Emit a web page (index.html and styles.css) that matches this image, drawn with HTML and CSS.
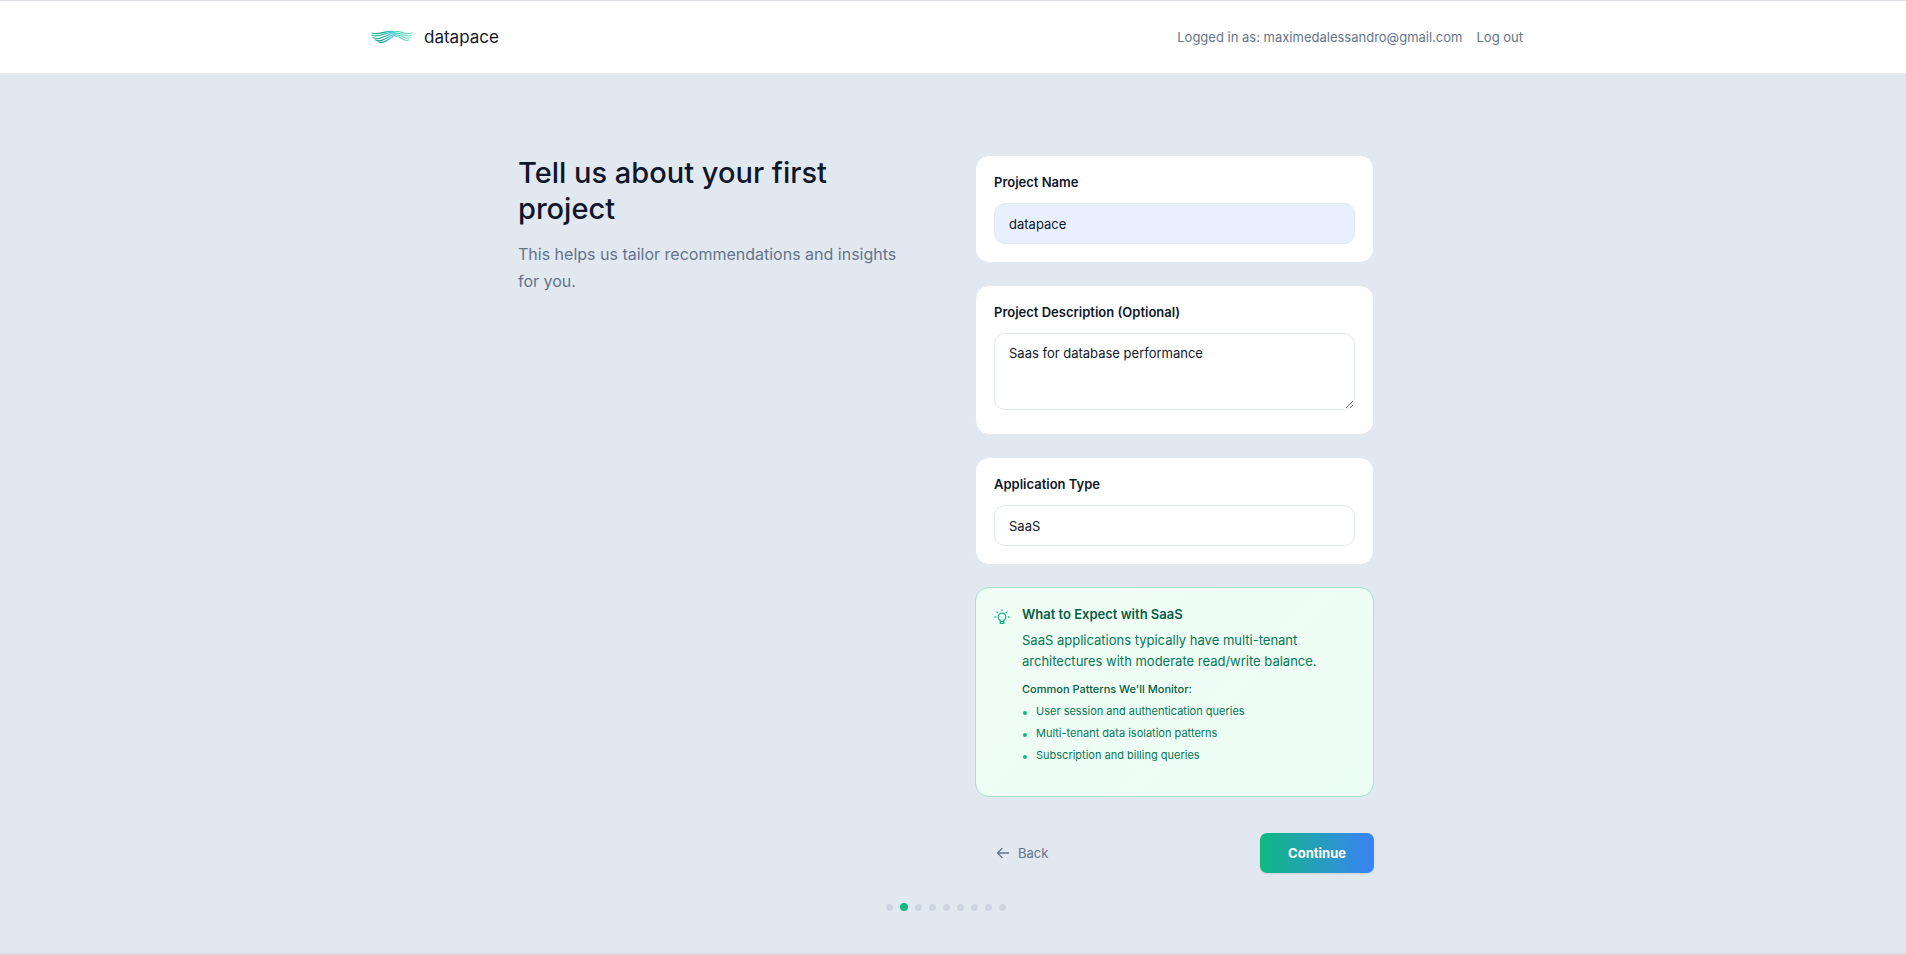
FILE: index.html
```html
<!DOCTYPE html>
<html lang="en">
<head>
    <meta charset="UTF-8">
    <meta name="viewport" content="width=device-width, initial-scale=1.0">
    <title>datapace</title>
    <link rel="stylesheet" href="styles.css">
</head>
<body>
    <header class="header">
        <div class="header-inner">
            <a class="brand" href="#">
                <svg class="brand-mark" viewBox="0 0 42 16" fill="none" stroke-linecap="round" aria-hidden="true">
                    <defs>
                        <linearGradient id="wave-left" x1="0" y1="0" x2="26" y2="0" gradientUnits="userSpaceOnUse">
                            <stop offset="0" stop-color="#2cc79a"/>
                            <stop offset="0.4" stop-color="#0e9f86"/>
                            <stop offset="0.75" stop-color="#38bfe0"/>
                            <stop offset="1" stop-color="#5be3c4"/>
                        </linearGradient>
                        <linearGradient id="wave-right" x1="16" y1="0" x2="42" y2="0" gradientUnits="userSpaceOnUse">
                            <stop offset="0" stop-color="#6be8bf"/>
                            <stop offset="0.5" stop-color="#22c3a6"/>
                            <stop offset="1" stop-color="#5fe6c6"/>
                        </linearGradient>
                    </defs>
                    <g stroke="url(#wave-right)">
                        <path d="M22 3.500C29 0 33 6.500 41 4"/>
                        <path d="M24 4.500C30 2.500 34 9 40.500 6.300"/>
                        <path d="M24 6C30 4.500 34 11.500 39.500 8.600"/>
                        <path d="M25 7.500C30 7 33 13.300 38 11"/>
                    </g>
                    <g stroke="url(#wave-left)" stroke-width="1.2">
                        <path d="M1 4C8 7 14 1 23 2.500"/>
                        <path d="M1 6.200C8 9.500 14 3 23 3"/>
                        <path d="M2 8.500C9 12 14 5.800 24 3.500"/>
                        <path d="M4 10.800C10 14 15 9 25 4"/>
                        <path d="M7.500 12.800C13 15 17 11 26 4.500"/>
                    </g>
                </svg>
                <span class="brand-name">datapace</span>
            </a>
            <div class="account">
                <span>Logged in as: maximedalessandro@gmail.com</span>
                <a href="#">Log out</a>
            </div>
        </div>
    </header>

    <main class="main">
        <div class="columns">
            <section class="intro">
                <h1>Tell us about your first project</h1>
                <p>This helps us tailor recommendations and insights for you.</p>
            </section>

            <form class="form">
                <div class="card">
                    <label for="name">Project Name</label>
                    <input class="field filled" id="name" type="text" value="datapace">
                </div>

                <div class="card card-description">
                    <label for="description">Project Description (Optional)</label>
                    <textarea class="field" id="description">Saas for database performance</textarea>
                </div>

                <div class="card">
                    <label for="type">Application Type</label>
                    <select class="field" id="type">
                        <option>SaaS</option>
                    </select>
                </div>

                <div class="expect">
                    <svg class="bulb" viewBox="0 0 16 16" fill="none" stroke="currentColor" stroke-width="1.3" stroke-linecap="round" stroke-linejoin="round" aria-hidden="true">
                        <path d="M6.200 11.400C5 10.700 4.200 9.500 4.200 8a3.800 3.800 0 0 1 7.600 0c0 1.500-.8 2.700-2 3.400v3H6.200zM6.200 12.400h3.600M8 1v.6M3 3l.5.5M13 3l-.5.5M1 8h.7M14.300 8h.7"/>
                    </svg>
                    <div>
                        <h2>What to Expect with SaaS</h2>
                        <p>SaaS applications typically have multi-tenant architectures with moderate read/write balance.</p>
                        <h3>Common Patterns We'll Monitor:</h3>
                        <ul>
                            <li>User session and authentication queries</li>
                            <li>Multi-tenant data isolation patterns</li>
                            <li>Subscription and billing queries</li>
                        </ul>
                    </div>
                </div>

                <div class="actions">
                    <button class="btn-back" type="button">
                        <svg viewBox="0 0 14 14" fill="none" stroke="currentColor" stroke-width="1.3" stroke-linecap="round" stroke-linejoin="round" aria-hidden="true">
                            <path d="M12.500 7H1.500M6 2.500L1.500 7L6 11.500"/>
                        </svg>
                        Back
                    </button>
                    <button class="btn-continue" type="submit">Continue</button>
                </div>
            </form>
        </div>

        <div class="steps">
            <span></span>
            <span class="active"></span>
            <span></span>
            <span></span>
            <span></span>
            <span></span>
            <span></span>
            <span></span>
            <span></span>
        </div>
    </main>
    <div class="bottom-edge"></div>
</body>
</html>
```

FILE: styles.css
```css
* {
    box-sizing: border-box;
}
body {
    margin: 0;
    min-height: 100vh;
    display: flex;
    flex-direction: column;
    background: #e2e8f0;
    color: #0f172a;
    font-family: Inter, sans-serif;
    font-size: 13px;
    line-height: 18px;
}
h1, h2, h3, p, ul {
    margin: 0;
}
a {
    color: inherit;
    text-decoration: none;
}

.header {
    background: #fff;
    border-top: 1px solid #dcdde4;
    padding: 0 12px 0 0;
}
.header-inner {
    max-width: 1152px;
    height: 72px;
    margin: 0 auto;
    display: flex;
    align-items: center;
    justify-content: space-between;
}
.brand {
    display: flex;
    align-items: center;
    gap: 11px;
}
.brand-mark {
    width: 42px;
    height: 16px;
}
.brand-name {
    font-size: 17px;
}
.account {
    display: flex;
    gap: 14px;
    color: #64748b;
}

.main {
    flex: 1;
    padding: 82px 14px 0 0;
}
.columns {
    max-width: 856px;
    margin: 0 auto;
    display: grid;
    grid-template-columns: 1fr 1fr;
    gap: 58px;
}
.intro h1 {
    font-size: 29px;
    font-weight: 500;
    line-height: 36px;
}
.intro p {
    margin-top: 14px;
    color: #64748b;
    font-size: 16px;
    line-height: 27px;
}

.form {
    display: flex;
    flex-direction: column;
    gap: 22px;
}
.card {
    background: #fff;
    border: 1px solid #e2e8f0;
    border-radius: 14px;
    padding: 18px;
}
.card-description {
    padding-bottom: 24px;
}
.card label {
    display: block;
    margin-bottom: 13px;
    font-weight: 600;
    line-height: 16px;
}
.field {
    display: block;
    width: 100%;
    height: 41px;
    padding: 10px 14px;
    border: 1px solid #e2e8f0;
    border-radius: 11px;
    background: #fff;
    color: #0f172a;
    font: inherit;
    appearance: none;
}
textarea.field {
    height: 77px;
    resize: vertical;
}
.filled {
    background: #e8f0fe;
}

.expect {
    display: flex;
    gap: 12px;
    min-height: 210px;
    padding: 18px;
    border: 1px solid #a7e3cb;
    border-radius: 14px;
    background: linear-gradient(135deg, #f0fdf4, #ecfdf5);
    color: #047857;
}
.bulb {
    flex: none;
    width: 16px;
    height: 16px;
    margin-top: 3px;
    color: #10b981;
}
.expect h2 {
    color: #065f46;
    font-size: 13px;
    font-weight: 600;
    line-height: 16px;
}
.expect p {
    margin-top: 8px;
    line-height: 21px;
}
.expect h3 {
    margin-top: 8px;
    color: #065f46;
    font-size: 11px;
    font-weight: 500;
}
.expect ul {
    margin-top: 4px;
    padding: 0;
    display: grid;
    gap: 4px;
    list-style: none;
    font-size: 11px;
    line-height: 18px;
}
.expect li {
    display: flex;
    align-items: center;
    gap: 9px;
}
.expect li::before {
    content: "";
    width: 4px;
    height: 4px;
    margin: 3px 0 0 1px;
    border-radius: 50%;
    background: #10b981;
}

.actions {
    display: flex;
    align-items: center;
    justify-content: space-between;
    margin-top: 14px;
}
.actions button {
    height: 40px;
    border: 0;
    font: inherit;
    cursor: pointer;
}
.btn-back {
    display: flex;
    align-items: center;
    gap: 8px;
    padding: 0 21px;
    background: none;
    color: #64748b;
}
.btn-back svg {
    width: 14px;
    height: 14px;
}
.actions .btn-continue {
    padding: 0 28px;
    border-radius: 7px;
    background: linear-gradient(to right, #10b981, #3b82f6);
    box-shadow: 0 1px 2px rgba(15, 23, 42, 0.1);
    color: #fff;
    font-weight: 700;
}

.steps {
    display: flex;
    align-items: center;
    justify-content: center;
    gap: 7px;
    margin-top: 30px;
}
.steps span {
    width: 7px;
    height: 7px;
    border-radius: 50%;
    background: #cbd5e1;
}
.steps .active {
    width: 8px;
    height: 8px;
    background: #10b981;
}

.bottom-edge {
    height: 2px;
    background: #e2d5e2;
}
```
